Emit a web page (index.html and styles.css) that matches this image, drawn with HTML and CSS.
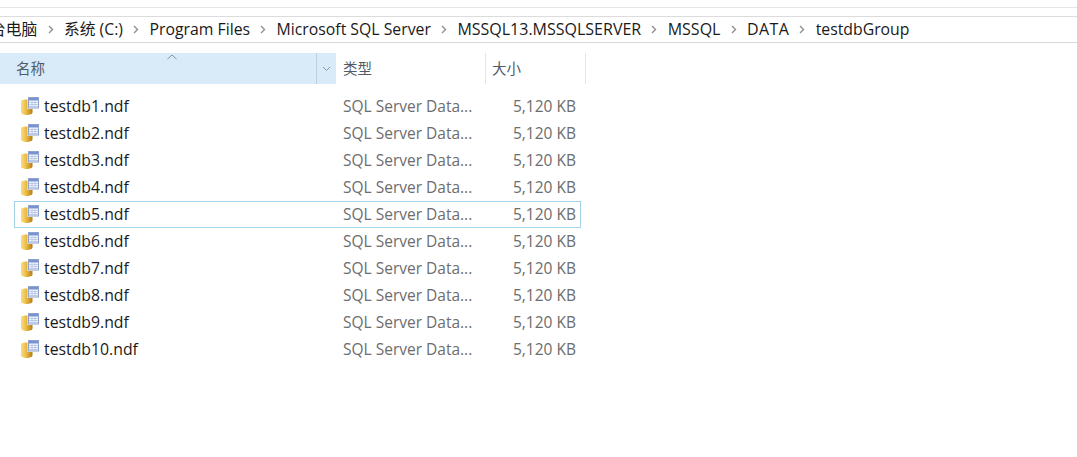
FILE: index.html
```html
<!DOCTYPE html>
<html lang="zh-CN">
<head>
    <meta charset="UTF-8">
    <title>testdbGroup</title>
    <link rel="stylesheet" href="styles.css">
</head>
<body>
    <svg class="sprite" width="0" height="0">
        <defs>
            <linearGradient id="can" x1="0" x2="1" y1="0" y2="0">
                <stop offset="0" stop-color="#f9dd85"/>
                <stop offset="0.4" stop-color="#eec04a"/>
                <stop offset="1" stop-color="#b57c18"/>
            </linearGradient>
            <symbol id="dbfile" viewBox="0 0 18 18">
                <path d="M0 4.500C0 3 3 2.500 5.500 2.500s6 .5 6 2V15.500c0 1.500-2.800 2.500-5.800 2.500S0 17 0 15.500z" fill="url(#can)"/>
                <rect x="6.500" y="0" width="11.500" height="12" fill="#fff"/>
                <rect x="7.500" y="0.500" width="10" height="10.500" fill="#f3f6fb" stroke="#8ea2cc"/>
                <rect x="8" y="1" width="9" height="2.500" fill="#7893cf"/>
                <path d="M8 5.500H17M8 7.500H17M8 9.500H17M11 3.500V11M14 3.500V11" stroke="#b4c4e3" stroke-width="0.800"/>
            </symbol>
            <symbol id="chevron" viewBox="0 0 6 9">
                <path d="M1 1l3.500 3.500L1 8" fill="none" stroke="#8f8f8f" stroke-width="1.400"/>
            </symbol>
        </defs>
    </svg>

    <nav class="toolbar">
        <div class="crumbs">
            <span class="crumb first">台电脑</span><span class="sep"><svg width="6" height="9"><use href="#chevron"/></svg></span>
            <span class="crumb">系统 (C:)</span><span class="sep"><svg width="6" height="9"><use href="#chevron"/></svg></span>
            <span class="crumb">Program Files</span><span class="sep"><svg width="6" height="9"><use href="#chevron"/></svg></span>
            <span class="crumb">Microsoft SQL Server</span><span class="sep"><svg width="6" height="9"><use href="#chevron"/></svg></span>
            <span class="crumb wide">MSSQL13.MSSQLSERVER</span><span class="sep"><svg width="6" height="9"><use href="#chevron"/></svg></span>
            <span class="crumb wide">MSSQL</span><span class="sep"><svg width="6" height="9"><use href="#chevron"/></svg></span>
            <span class="crumb wide data">DATA</span><span class="sep"><svg width="6" height="9"><use href="#chevron"/></svg></span>
            <span class="crumb">testdbGroup</span>
        </div>
    </nav>

    <div class="headers">
        <div class="col-head name-head">
            <span>名称</span>
            <svg class="sort" width="10" height="6" viewBox="0 0 10 6"><path d="M.5 5 5 1l4.500 4" fill="none" stroke="#8a8f96"/></svg>
            <span class="drop"><svg width="9" height="6" viewBox="0 0 9 6"><path d="M1 1l3.500 3.500L8 1" fill="none" stroke="#8a97a5"/></svg></span>
        </div>
        <div class="col-head type-head">类型</div>
        <div class="col-head size-head">大小</div>
    </div>

    <ul class="files" id="files"></ul>

    <script>
        const list = document.getElementById('files');
        for (let i = 1; i <= 10; i++) {
            const row = document.createElement('li');
            row.className = i === 5 ? 'file selected' : 'file';
            row.innerHTML = `
                <svg class="icon" width="18" height="18"><use href="#dbfile"/></svg>
                <span class="fname">testdb${i}.ndf</span>
                <span class="ftype">SQL Server Data...</span>
                <span class="fsize">5,120 KB</span>`;
            list.appendChild(row);
        }
    </script>
</body>
</html>
```

FILE: styles.css
```css
html, body {
    height: 100%;
}

body {
    margin: 0;
    background: #fff;
    color: #1a1a1a;
    font-family: "Open Sans", "Noto Sans CJK SC", sans-serif;
    font-size: 15.5px;
    overflow: hidden;
}

.sprite {
    display: block;
}

.toolbar {
    margin-top: 7px;
    padding-top: 8px;
    border-top: 1px solid #e6e6e6;
}

.crumbs {
    display: flex;
    align-items: center;
    height: 23px;
    padding-bottom: 2px;
    border-top: 1px solid #dcdcdc;
    border-bottom: 1px solid #d9d9d9;
    font-size: 15.800px;
    white-space: nowrap;
    overflow: hidden;
}

.crumb.first {
    margin-left: -10px;
}

.crumb.wide {
    font-size: 16px;
}

.crumb.data {
    letter-spacing: 0.400px;
}

.sep {
    display: flex;
    align-items: center;
    justify-content: center;
    width: 26.500px;
    padding-top: 2px;
}

.headers {
    display: flex;
    height: 31px;
    margin-top: 10px;
    color: #4f5b67;
    font-size: 14.500px;
}

.col-head {
    display: flex;
    align-items: center;
    position: relative;
    box-sizing: border-box;
    padding-left: 7px;
    padding-bottom: 2px;
    border-right: 1px solid #e5e5e5;
}

.name-head {
    width: 336px;
    padding-left: 16px;
    background: #d9ebf9;
    border-right: none;
}

.type-head {
    width: 150px;
}

.size-head {
    width: 100px;
    padding-left: 6px;
}

.sort {
    position: absolute;
    left: 167px;
    top: 1px;
}

.drop {
    position: absolute;
    right: 0;
    top: 0;
    bottom: 0;
    width: 19px;
    display: flex;
    align-items: center;
    justify-content: center;
    border-left: 1px solid #bcd0e2;
}

.files {
    list-style: none;
    margin: 9px 0 0 14px;
    padding: 0;
    width: 567px;
}

.file {
    display: flex;
    align-items: center;
    box-sizing: border-box;
    height: 27px;
    padding-bottom: 2px;
    border: 1px solid transparent;
}

.file.selected {
    border-color: #a4d2e8;
}

.icon {
    margin-left: 6px;
    margin-top: 1px;
    flex: none;
}

.fname {
    width: 299px;
    margin-left: 5px;
    font-size: 15.800px;
}

.ftype {
    width: 140px;
    color: #6d6d6d;
}

.fsize {
    width: 93px;
    text-align: right;
    color: #6d6d6d;
}
```
